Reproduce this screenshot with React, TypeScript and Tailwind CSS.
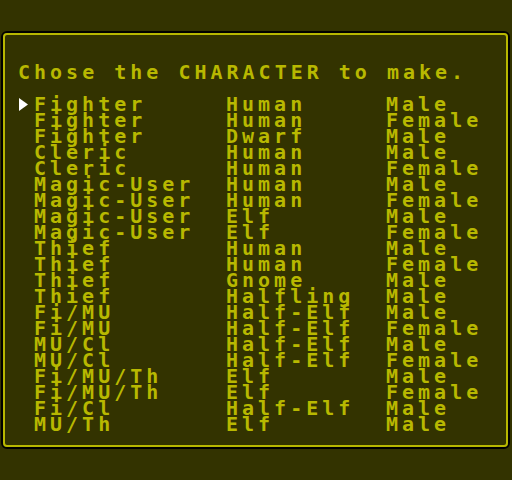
const rows: [string, string, string][] = [
  ["Fighter", "Human", "Male"],
  ["Fighter", "Human", "Female"],
  ["Fighter", "Dwarf", "Male"],
  ["Cleric", "Human", "Male"],
  ["Cleric", "Human", "Female"],
  ["Magic-User", "Human", "Male"],
  ["Magic-User", "Human", "Female"],
  ["Magic-User", "Elf", "Male"],
  ["Magic-User", "Elf", "Female"],
  ["Thief", "Human", "Male"],
  ["Thief", "Human", "Female"],
  ["Thief", "Gnome", "Male"],
  ["Thief", "Halfling", "Male"],
  ["Fi/MU", "Half-Elf", "Male"],
  ["Fi/MU", "Half-Elf", "Female"],
  ["MU/Cl", "Half-Elf", "Male"],
  ["MU/Cl", "Half-Elf", "Female"],
  ["Fi/MU/Th", "Elf", "Male"],
  ["Fi/MU/Th", "Elf", "Female"],
  ["Fi/Cl", "Half-Elf", "Male"],
  ["MU/Th", "Elf", "Male"],
];

export default function App() {
  const selected = 0;

  return (
    <div className="w-[512px] h-[480px] bg-[#333300] pt-[31px] pl-[1px] overflow-hidden">
      {/* double frame: black outside, yellow inside */}
      <div className="w-[509px] h-[418px] border-2 border-black rounded-[6px]">
        <div
          className="h-full border-2 border-[#b8b800] rounded-[4px] pl-[13px] pt-[29px] text-[#b8b800] text-[20px] leading-[16px] font-bold tracking-[4px] whitespace-pre"
          style={{ fontFamily: '"DejaVu Sans Mono", "Liberation Mono", monospace' }}
        >
          <div className="h-[16px]">Chose the CHARACTER to make.</div>

          <div className="mt-[16px] grid grid-cols-[16px_192px_160px_1fr]">
            {rows.map(([cls, race, sex], i) => (
              <div key={i} className="contents">
                <div className="h-[16px] flex items-center">
                  {i === selected && (
                    <svg width="9" height="13" viewBox="0 0 9 13" className="ml-[1px]">
                      <polygon points="0,0 9,6.5 0,13" fill="#ffffff" />
                    </svg>
                  )}
                </div>
                <div className="h-[16px]">{cls}</div>
                <div className="h-[16px]">{race}</div>
                <div className="h-[16px]">{sex}</div>
              </div>
            ))}
          </div>
        </div>
      </div>
    </div>
  );
}
